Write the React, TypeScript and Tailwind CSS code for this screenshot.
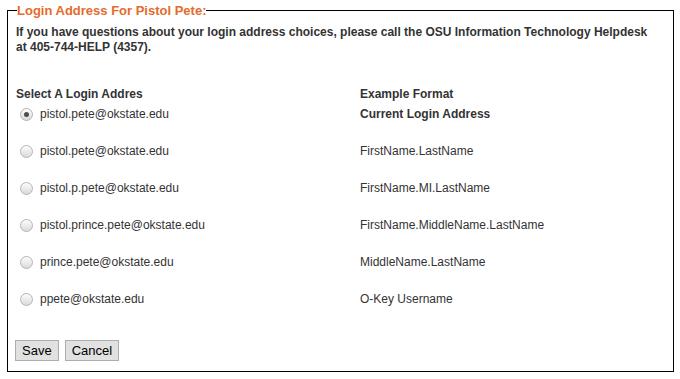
import { useState } from 'react';

const options = [
  { email: 'pistol.pete@okstate.edu', format: 'Current Login Address', bold: true },
  { email: 'pistol.pete@okstate.edu', format: 'FirstName.LastName' },
  { email: 'pistol.p.pete@okstate.edu', format: 'FirstName.MI.LastName' },
  { email: 'pistol.prince.pete@okstate.edu', format: 'FirstName.MiddleName.LastName' },
  { email: 'prince.pete@okstate.edu', format: 'MiddleName.LastName' },
  { email: 'ppete@okstate.edu', format: 'O-Key Username' },
];

function Radio({ checked, onClick }: { checked: boolean; onClick: () => void }) {
  return (
    <span
      onClick={onClick}
      className="w-[13px] h-[13px] rounded-full border border-[#b4b4b4] bg-gradient-to-b from-[#fdfdfd] to-[#dadada] flex items-center justify-center shrink-0 cursor-pointer"
    >
      {checked && <span className="w-[5px] h-[5px] rounded-full bg-[#4d4d4d]" />}
    </span>
  );
}

export default function App() {
  const [selected, setSelected] = useState(0);

  return (
    <div className="w-[680px] h-[379px] bg-white pt-[3px] pl-[7px] font-['Liberation_Sans',Arial,sans-serif] text-[#333]">
      <fieldset className="w-[667px] h-[369px] border border-black px-[8px] pt-[7px]">
        <legend className="text-[13px] leading-[15px] font-bold text-[#e46b2c] ml-[1px]">
          Login Address For Pistol Pete:
        </legend>

        <p className="text-[12px] leading-[15px] font-bold">
          If you have questions about your login address choices, please call the OSU Information Technology Helpdesk
          <br />
          at 405-744-HELP (4357).
        </p>

        {/* options table */}
        <div className="mt-[29px] grid grid-cols-[344px_1fr] text-[12px]">
          <div className="h-[20px] leading-[20px] font-bold">Select A Login Addres</div>
          <div className="h-[20px] leading-[20px] font-bold">Example Format</div>

          {options.map((o, i) => (
            <div key={i} className="contents">
              <div className="h-[37px] flex items-start">
                <div className="h-[20px] flex items-center gap-[7px] pl-[4px]">
                  <Radio checked={selected === i} onClick={() => setSelected(i)} />
                  <span>{o.email}</span>
                </div>
              </div>
              <div className={'h-[37px] leading-[20px] ' + (o.bold ? 'font-bold' : '')}>{o.format}</div>
            </div>
          ))}
        </div>

        <div className="mt-[14px] -ml-[1px] flex gap-[6px]">
          <button className="h-[21px] px-[6px] text-[13px] text-black border border-[#adadad] bg-[#e1e1e1]">
            Save
          </button>
          <button className="h-[21px] px-[6px] text-[13px] text-black border border-[#adadad] bg-[#e1e1e1]">
            Cancel
          </button>
        </div>
      </fieldset>
    </div>
  );
}
